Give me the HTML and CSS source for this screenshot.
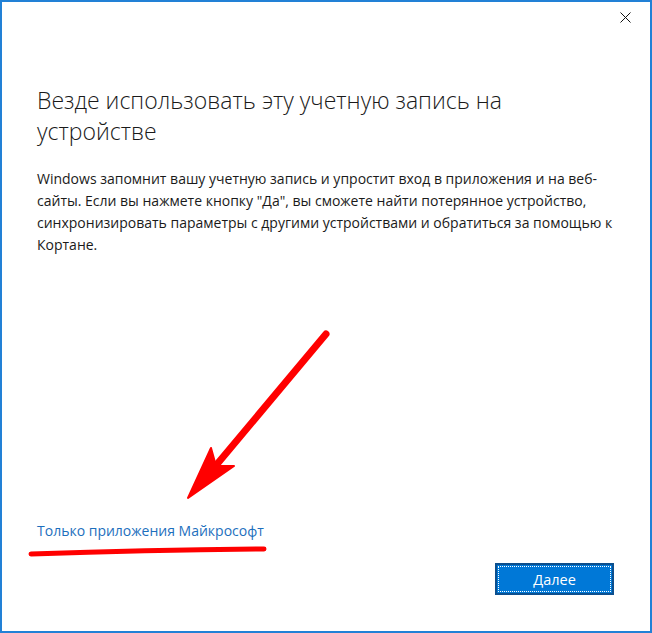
FILE: index.html
```html
<!DOCTYPE html>
<html lang="ru">
<head>
<meta charset="utf-8">
<link rel="stylesheet" href="styles.css">
</head>
<body>
<div class="window">
  <div class="titlebar">
    <button class="close" aria-label="Закрыть">
      <svg width="11" height="11" viewBox="0 0 11 11"><path d="M0.5 0.5 L10.5 10.5 M10.5 0.5 L0.5 10.5" stroke="#111" stroke-width="1" fill="none"/></svg>
    </button>
  </div>
  <div class="content">
    <h1 class="title">Везде использовать эту учетную запись на<br>устройстве</h1>
    <p class="desc">Windows запомнит вашу учетную запись и упростит вход в приложения и на веб-<br>сайты. Если вы нажмете кнопку "Да", вы сможете найти потерянное устройство,<br>синхронизировать параметры с другими устройствами и обратиться за помощью к<br>Кортане.</p>
    <div class="spacer"></div>
    <a class="link" href="#">Только приложения Майкрософт</a>
  </div>
  <div class="footer">
    <button class="primary"><span class="focus">Далее</span></button>
  </div>
  <svg class="annot" width="652" height="633" viewBox="0 0 652 633">
    <path d="M326 334 L213 469" stroke="#ff0000" stroke-width="7" stroke-linecap="round" fill="none"/>
    <path d="M188 498 L211 448 L216 466 L234 466 Z" fill="#ff0000" stroke="#ff0000" stroke-width="2" stroke-linejoin="round"/>
    <path d="M31 554 Q150 550 264 549" stroke="#ff0000" stroke-width="5" stroke-linecap="round" fill="none"/>
  </svg>
</div>
</body>
</html>
```
FILE: styles.css
```css
html, body {
  margin: 0;
  padding: 0;
  background: #ffffff;
}
.window {
  position: relative;
  box-sizing: border-box;
  width: 652px;
  height: 633px;
  border: 2px solid #2281d6;
  background: #ffffff;
  display: flex;
  flex-direction: column;
  font-family: "Open Sans", "Noto Sans", sans-serif;
  color: #1a1a1a;
}
.titlebar {
  height: 32px;
  display: flex;
  justify-content: flex-end;
  align-items: flex-start;
}
.close {
  width: 46px;
  height: 32px;
  border: 0;
  background: transparent;
  padding: 10px 0 0 0;
  margin-right: 2px;
  display: flex;
  justify-content: center;
  align-items: flex-start;
}
.content {
  flex: 1;
  display: flex;
  flex-direction: column;
  padding: 0 35px;
}
.title {
  margin: 51px 0 0 0;
  font-weight: 300;
  font-size: 23px;
  line-height: 31px;
  color: #1a1a1a;
}
.desc {
  margin: 21px 0 0 0;
  font-size: 14px;
  line-height: 22px;
  color: #1a1a1a;
}
.spacer {
  flex: 1;
}
.link {
  font-size: 14px;
  color: #1d6fbd;
  text-decoration: none;
  line-height: 20px;
  margin-bottom: 22px;
}
.footer {
  height: 68px;
  display: flex;
  justify-content: flex-end;
  align-items: flex-start;
  padding-right: 36px;
}
.primary {
  box-sizing: border-box;
  width: 119px;
  height: 32px;
  background: #0078d7;
  border: 2px solid #0c4f8e;
  padding: 1px;
  color: #ffffff;
  font-family: "Open Sans", "Noto Sans", sans-serif;
  font-size: 14.5px;
}
.focus {
  display: flex;
  align-items: center;
  justify-content: center;
  height: 100%;
  border: 1px dotted #ffffff;
  box-sizing: border-box;
}
.annot {
  position: absolute;
  left: -2px;
  top: -2px;
  pointer-events: none;
}
```
